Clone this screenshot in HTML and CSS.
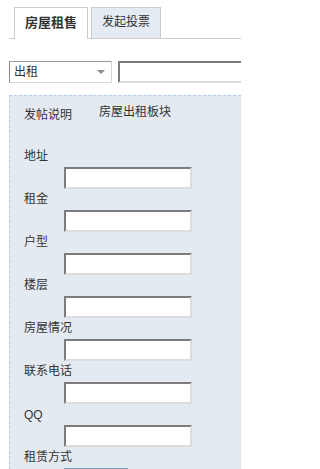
FILE: index.html
```html
<!DOCTYPE html>
<html lang="zh-CN">
<head>
<meta charset="utf-8">
<title>房屋租售</title>
<link rel="stylesheet" href="styles.css">
</head>
<body>
<div class="page">
  <ul class="tabs">
    <li class="tab active">房屋租售</li>
    <li class="tab">发起投票</li>
  </ul>
  <div class="typebar">
    <span class="selectwrap">
      <select class="type"><option>出租</option><option>求租</option></select>
      <span class="arrow"></span>
    </span>
    <input class="title" type="text">
  </div>
  <div class="panel">
    <div class="intro">
      <span class="intro-label">发帖说明</span>
      <span class="intro-text">房屋出租板块</span>
    </div>
    <div class="fields">
      <div class="field"><label>地址</label><input class="box" type="text"></div>
      <div class="field"><label>租金</label><input class="box" type="text"></div>
      <div class="field"><label>户型</label><input class="box" type="text"></div>
      <div class="field"><label>楼层</label><input class="box" type="text"></div>
      <div class="field"><label>房屋情况</label><input class="box" type="text"></div>
      <div class="field"><label>联系电话</label><input class="box" type="text"></div>
      <div class="field"><label class="latin">QQ</label><input class="box" type="text"></div>
      <div class="field"><label>租赁方式</label><select class="mode"><option></option></select></div>
    </div>
  </div>
</div>
</body>
</html>
```

FILE: styles.css
```css
html, body {
  margin: 0;
  padding: 0;
  overflow: hidden;
  background: #ffffff;
}
body {
  font-family: "Liberation Sans", "Noto Sans CJK SC", sans-serif;
  font-size: 12px;
  color: #333333;
}
.page {
  box-sizing: border-box;
  padding-top: 7px;
  width: 241px;
  height: 469px;
  overflow: hidden;
}
.tabs {
  list-style: none;
  margin: 0 0 0 9px;
  padding: 0 0 0 5px;
  display: flex;
  align-items: flex-end;
  border-bottom: 1px solid #cccccc;
  height: 31px;
}
.tab {
  box-sizing: border-box;
  height: 31px;
  border: 1px solid #cccccc;
  border-bottom: none;
  background: #e4ebf2;
  padding: 0 10px;
  line-height: 29px;
  font-size: 12px;
  margin-left: 3px;
}
.tab.active {
  margin-left: 0;
  height: 32px;
  margin-bottom: -1px;
  background: #ffffff;
  font-weight: bold;
  font-size: 13px;
  padding: 0 10px;
}
.typebar {
  margin: 22px 0 0 9px;
  display: flex;
  white-space: nowrap;
  height: 22px;
  overflow: hidden;
}
.selectwrap {
  position: relative;
  display: block;
  flex: none;
  width: 103px;
  height: 22px;
}
.type {
  appearance: none;
  -webkit-appearance: none;
  box-sizing: border-box;
  width: 103px;
  height: 22px;
  margin: 0;
  padding: 0 0 0 4px;
  border: 1px solid;
  border-color: #9a9a9a #d6d6d6 #d6d6d6 #8a8a8a;
  border-radius: 0;
  background: #ffffff;
  font-family: "Liberation Sans", "Noto Sans CJK SC", sans-serif;
  font-size: 12px;
  color: #333333;
  outline: none;
}
.arrow {
  position: absolute;
  left: 88px;
  top: 9px;
  width: 0;
  height: 0;
  border-top: 4px solid #8c8c8c;
  border-left: 4px solid transparent;
  border-right: 4px solid transparent;
}
.title {
  box-sizing: border-box;
  flex: none;
  width: 200px;
  height: 22px;
  margin: 0 0 0 6px;
  padding: 0;
  border: 2px solid;
  border-color: #7c7c7c #dcdcdc #dcdcdc #7c7c7c;
  background: #ffffff;
}
.panel {
  margin: 12px 0 0 9px;
  border-top: 1px dashed #b8cde1;
  border-left: 1px dashed #b8cde1;
  background: #e3eaf2;
  padding: 7px 0 0 14px;
  height: 366px;
  overflow: hidden;
}
.intro {
  display: flex;
  align-items: center;
  height: 24px;
}
.intro-label {
  line-height: 20px;
  width: 75px;
}
.intro-text {
  align-self: flex-start;
  line-height: 18px;
}
.fields {
  margin-top: 19px;
}
.field label {
  display: block;
  height: 21px;
  line-height: 21px;
}
.field .latin {
  font-family: "Liberation Sans", sans-serif;
  font-size: 12px;
  line-height: 22px;
}
.box {
  display: block;
  box-sizing: border-box;
  width: 128px;
  height: 22px;
  margin: 0 0 0 40px;
  padding: 0;
  border: 2px solid;
  border-color: #7c7c7c #dcdcdc #dcdcdc #7c7c7c;
  background: #ffffff;
}
.mode {
  display: block;
  appearance: none;
  -webkit-appearance: none;
  box-sizing: border-box;
  width: 64px;
  height: 20px;
  margin: 0 0 0 40px;
  border: 1px solid #7f9db9;
  border-radius: 0;
  background: #ffffff;
}
```
